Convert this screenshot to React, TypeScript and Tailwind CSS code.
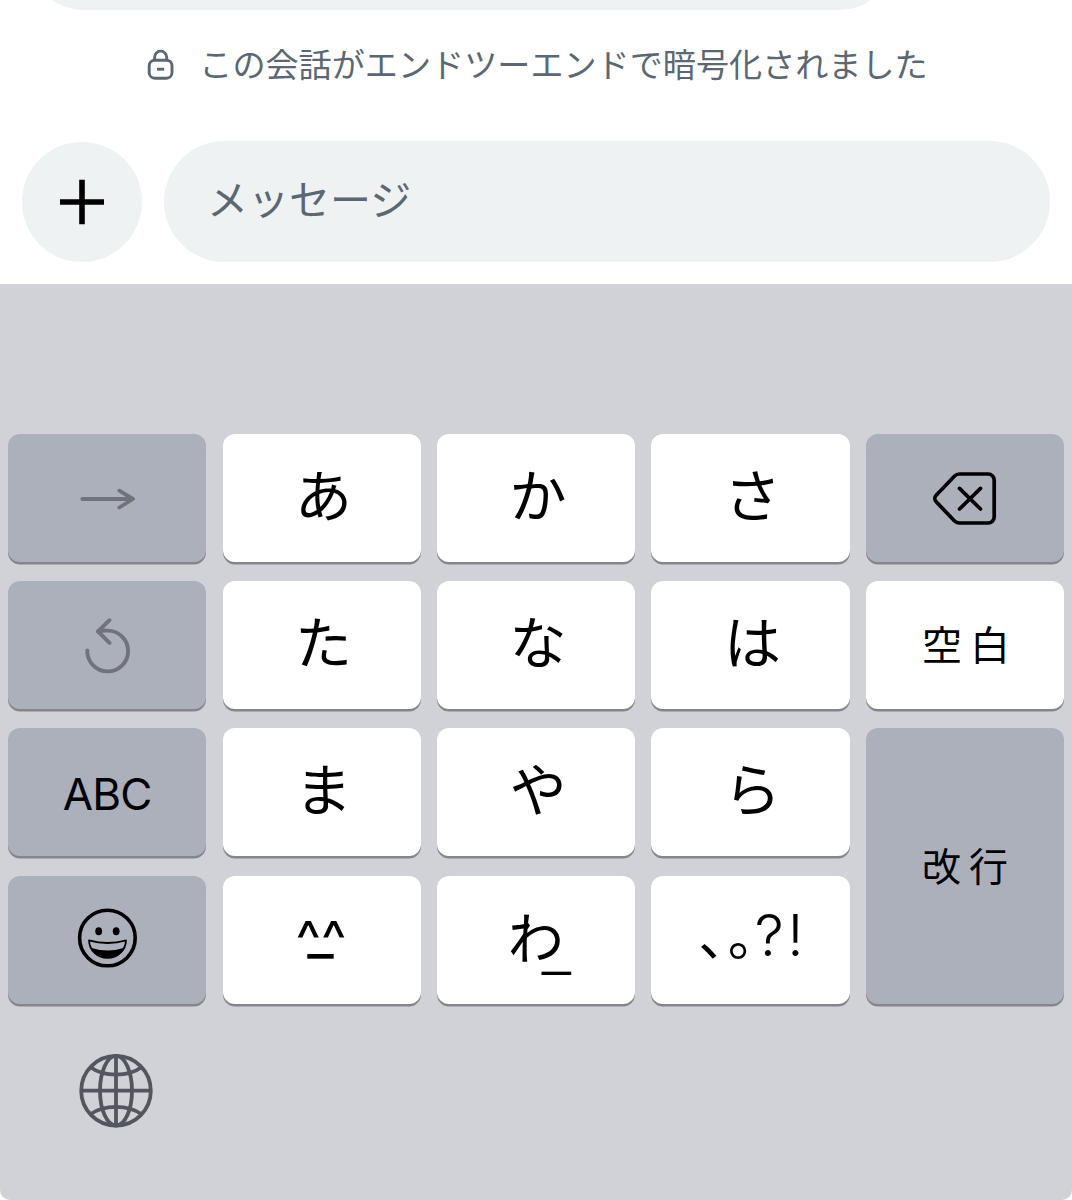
import type { ReactNode } from 'react';
import clsx from 'clsx';

interface KeyProps {
  children: ReactNode;
  label?: string;
  dark?: boolean;
  tall?: boolean;
}

// Single keyboard key
const Key = ({ children, label, dark, tall }: KeyProps) => (
  <button
    aria-label={label}
    className={clsx(
      'flex items-center justify-center rounded-[12px] shadow-[0_2.5px_0_#85868b]',
      dark ? 'bg-[#acb0bb]' : 'bg-white',
      tall && 'row-span-2'
    )}
  >
    {children}
  </button>
);

const Kana = ({ children }: { children: string }) => (
  <span className="pb-[12px] pl-[4px] text-[57px] leading-none">{children}</span>
);

const LockIcon = () => (
  <svg className="mt-[1px] h-8 w-7" viewBox="0 0 28 32" fill="none" stroke="#5b6773" strokeWidth={2.9}>
    <rect x="3.2" y="11.2" width="22.8" height="18" rx="5.5" />
    <path d="M8.6 11V8.2a6.05 6.05 0 0 1 12.1 0V11" />
    <path d="M11 20.2h7.2" />
  </svg>
);

const PlusIcon = () => (
  <svg className="h-[46px] w-[46px]" viewBox="0 0 46 46" stroke="#000" strokeWidth={5.6}>
    <path d="M23 0.7v44.6M1 23h44" />
  </svg>
);

const ArrowIcon = () => (
  <svg className="ml-[2px] h-6 w-14" viewBox="0 0 56 24" fill="none" stroke="#71737a" strokeWidth={3.8} strokeLinecap="round" strokeLinejoin="round">
    <path d="M2.3 13h50.5M39.3 4.7L53 13l-13.7 8.5" />
  </svg>
);

const UndoIcon = () => (
  <svg className="mt-[1px] ml-[2px] h-14 w-12" viewBox="0 0 48 56" fill="none" stroke="#71737a" strokeWidth={3.9} strokeLinecap="round" strokeLinejoin="round">
    <path d="M3.3 32.4A20.4 20.4 0 1 0 23.6 12.6Q18 12.3 14 13.4" />
    <path d="M25.5 2.2L14 13.4l11.5 11.4" />
  </svg>
);

const DeleteIcon = () => (
  <svg className="mt-[2px] h-14 w-16" viewBox="0 0 64 56" fill="none" stroke="#000" strokeWidth={3.7} strokeLinecap="round" strokeLinejoin="round">
    <path d="M26.5 3H55a6.2 6.2 0 0 1 6.2 6.2v36.6A6.2 6.2 0 0 1 55 52H26.5a7 7 0 0 1-4.9-2L3.2 30.8a4.7 4.7 0 0 1 0-6.6L21.6 5a7 7 0 0 1 4.9-2z" />
    <path d="M26.5 17.4l21 20.6M47.5 17.4L26.5 38" />
  </svg>
);

const SmileIcon = () => (
  <svg className="mb-[3px] h-[60px] w-[60px]" viewBox="0 0 60 60" fill="none" stroke="#000">
    <circle cx="30.4" cy="30" r="27.8" strokeWidth={3.6} />
    <ellipse cx="21.7" cy="23.2" rx="3.4" ry="4" fill="#000" stroke="none" />
    <ellipse cx="39.2" cy="23.2" rx="3.4" ry="4" fill="#000" stroke="none" />
    <path d="M12 32.4q18.5 5.2 37 0c-.3 9.8-8.5 17.4-18.5 17.4S12.300 42.200 12 32.400z" strokeWidth={1.8} strokeLinejoin="round" />
    <path d="M13.500 39.800q17 5.500 34 0c-2.500 7-9.500 10.200-17 10.200s-14.500-3.200-17-10.200z" fill="#000" stroke="none" />
  </svg>
);

const GlobeIcon = () => (
  <svg className="h-[74px] w-[74px]" viewBox="0 0 74 74" fill="none" stroke="#53565e" strokeWidth={3.8}>
    <circle cx="37" cy="36.7" r="34.8" />
    <ellipse cx="37" cy="36.7" rx="16" ry="34.8" />
    <path d="M37 2v70M2 36.7h70" />
    <path d="M11.5 13.2C25 23 49 23 62.5 13.2M11.5 60.2C25 50.4 49 50.4 62.5 60.2" />
  </svg>
);

const Composer = () => (
  <div className="flex items-end gap-[22px] px-[22px] pt-[47px] pb-[22px]">
    <button aria-label="+" className="flex h-[120px] w-[120px] items-center justify-center rounded-full bg-[#eef2f3]">
      <PlusIcon />
    </button>
    <div className="flex h-[121px] flex-1 items-center rounded-full bg-[#eef2f3] pb-[8px] pl-[43px] text-[41px] text-[#5b6773]">
      メッセージ
    </div>
  </div>
);

const Keyboard = () => (
  <div className="flex-1 rounded-b-[10px] bg-[#d1d2d8] pt-[150px] pr-2 pl-[8.05px] text-black">
    <div className="grid auto-rows-[128px] grid-cols-5 gap-x-[16.4px] gap-y-[19.2px]">
      <Key dark label="次"><ArrowIcon /></Key>
      <Key><Kana>あ</Kana></Key>
      <Key><Kana>か</Kana></Key>
      <Key><Kana>さ</Kana></Key>
      <Key dark label="削除"><DeleteIcon /></Key>

      <Key dark label="元に戻す"><UndoIcon /></Key>
      <Key><Kana>た</Kana></Key>
      <Key><Kana>な</Kana></Key>
      <Key><Kana>は</Kana></Key>
      <Key>
        <span className="pb-[5px] pl-[10px] text-[40px] leading-none tracking-[8px]">空白</span>
      </Key>

      <Key dark>
        <span className="pt-[3px] font-[Inter] text-[44px] leading-none tracking-[-0.8px]">ABC</span>
      </Key>
      <Key><Kana>ま</Kana></Key>
      <Key><Kana>や</Kana></Key>
      <Key><Kana>ら</Kana></Key>
      <Key dark tall>
        <span className="pb-[3px] pl-[8px] text-[39px] leading-none tracking-[8px]">改行</span>
      </Key>

      <Key dark label="絵文字"><SmileIcon /></Key>
      <Key>
        <span className="flex flex-col items-center pr-[1px] font-[Inter] leading-none">
          <span className="h-[17px] text-[54px] leading-[52px]">^^</span>
          <span className="h-[34px] pr-[1px] text-[58px] leading-[4px]">_</span>
        </span>
      </Key>
      <Key>
        <span className="flex items-center pb-[9px] text-[56px] leading-none">
          わ<span className="-mr-[8px] -ml-[23px] pt-[16px]">_</span>
        </span>
      </Key>
      <Key>
        <span className="flex items-baseline pb-[10px] pl-[6px] text-[53px] leading-none">
          ､<span className="ml-[2px]">｡</span>
          <span className="font-[Inter] text-[58px] font-light tracking-[3.5px]">?!</span>
        </span>
      </Key>
    </div>
    <div className="pt-[50px] pl-[71px]">
      <GlobeIcon />
    </div>
  </div>
);

export default function App() {
  return (
    <div lang="ja" className="flex h-[1200px] w-[1072px] flex-col overflow-hidden bg-white font-['Noto_Sans_CJK_JP',sans-serif]">
      {/* Bottom edge of the last message bubble */}
      <div className="flex h-[10px] items-end overflow-hidden pl-[25px]">
        <div className="h-[120px] w-[873px] shrink-0 rounded-[60px] bg-[#eef2f3]" />
      </div>
      <div className="flex h-[84px] items-center justify-center gap-[25px] pt-[24px] pl-[2px] text-[33.1px] leading-none text-[#5b6773]">
        <LockIcon />
        <span className="pb-[1px] tracking-[0.03px]">この会話がエンドツーエンドで暗号化されました</span>
      </div>
      <Composer />
      <Keyboard />
    </div>
  );
}
